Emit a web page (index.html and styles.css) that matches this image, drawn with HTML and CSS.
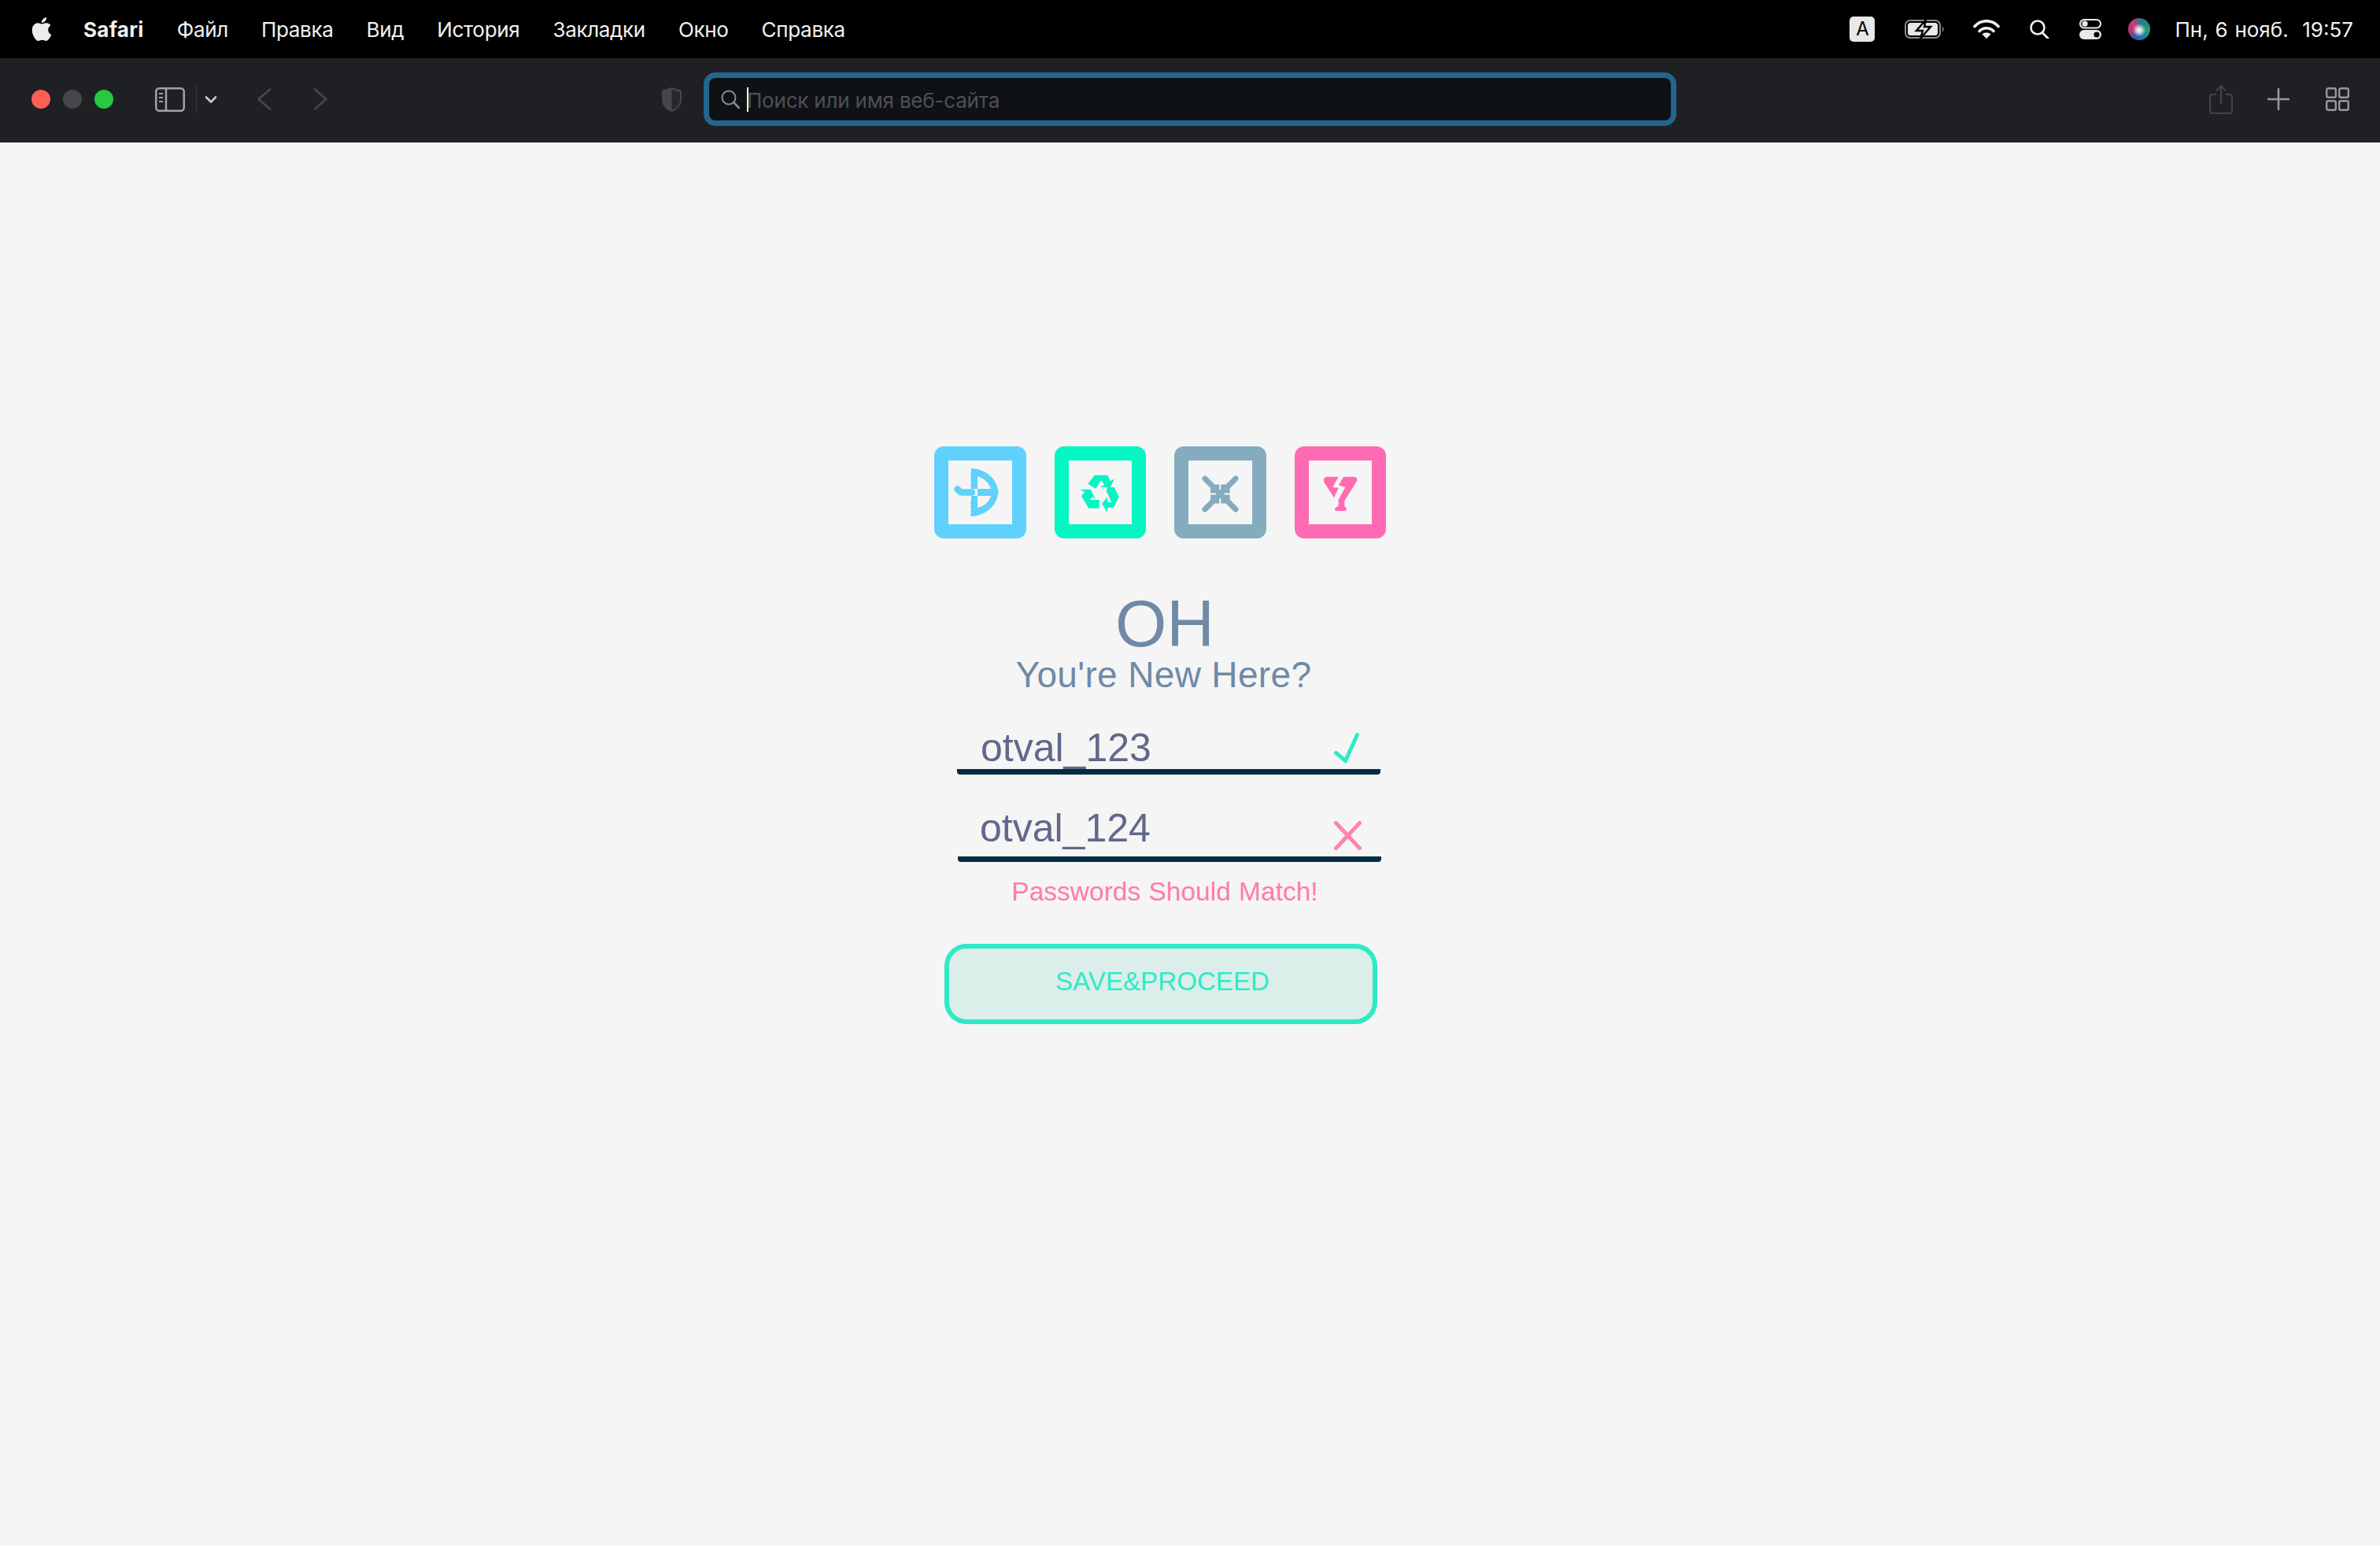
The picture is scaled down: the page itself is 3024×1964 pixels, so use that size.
FILE: index.html
```html
<!DOCTYPE html>
<html lang="ru">
<head>
<meta charset="utf-8">
<title>Safari</title>
<link rel="stylesheet" href="styles.css">
</head>
<body>
<header class="menubar">
  <svg class="apple" viewBox="0 0 24 24"><path fill="#ececec" d="M12.152 6.896c-.948 0-2.415-1.078-3.96-1.04-2.04.027-3.91 1.183-4.961 3.014-2.117 3.675-.546 9.103 1.519 12.09 1.013 1.454 2.208 3.09 3.792 3.039 1.52-.065 2.09-.987 3.935-.987 1.831 0 2.35.987 3.96.948 1.637-.026 2.676-1.48 3.676-2.948 1.156-1.688 1.636-3.325 1.662-3.415-.039-.013-3.182-1.221-3.22-4.857-.026-3.04 2.48-4.494 2.597-4.559-1.429-2.09-3.623-2.324-4.39-2.376-2-.156-3.675 1.09-4.61 1.09zM15.53 3.83c.843-1.012 1.4-2.427 1.245-3.83-1.207.052-2.662.805-3.532 1.818-.78.896-1.454 2.338-1.273 3.714 1.338.104 2.715-.688 3.559-1.701"/></svg>
  <nav class="menu">
    <span class="menu-app">Safari</span>
    <span>Файл</span>
    <span>Правка</span>
    <span>Вид</span>
    <span>История</span>
    <span>Закладки</span>
    <span>Окно</span>
    <span>Справка</span>
  </nav>
  <div class="status">
    <span class="input-badge">A</span>
    <svg class="st-battery" viewBox="0 0 51 24"><rect x="1" y="1" width="44" height="22" rx="6" fill="none" stroke="#8a8a8a" stroke-width="2"/><rect x="4" y="4" width="38" height="16" rx="3.5" fill="#e8e8e8"/><path d="M48 8.5c2 1 2 6 0 7z" fill="#8a8a8a"/><path d="M27 0 15 14h8l-3 10 13-15h-8z" fill="#e8e8e8" stroke="#000" stroke-width="2.5"/></svg>
    <svg class="st-wifi" viewBox="0 0 34 24"><g fill="none" stroke="#f0f0f0" stroke-width="3.6" stroke-linecap="round"><path d="M2 8.5C10-.5 24-.5 32 8.5"/><path d="M8 14.5c5-5 13-5 18 0"/></g><path d="M17 24l-5.5-5.5c3-2.6 8-2.6 11 0z" fill="#f0f0f0"/></svg>
    <svg class="st-search" viewBox="0 0 26 24"><circle cx="11" cy="10" r="8.5" fill="none" stroke="#f0f0f0" stroke-width="2.6"/><path d="M17 16.5l7 7" stroke="#f0f0f0" stroke-width="2.8" stroke-linecap="round"/></svg>
    <svg class="st-control" viewBox="0 0 28 26"><rect x="1" y="1" width="26" height="10.5" rx="5.2" fill="none" stroke="#e8e8e8" stroke-width="2"/><circle cx="7" cy="6.2" r="3.6" fill="#e8e8e8"/><rect y="14" width="28" height="12" rx="6" fill="#e8e8e8"/><circle cx="22" cy="20" r="3.6" fill="#000"/></svg>
    <span class="siri"></span>
    <span class="clock">Пн, 6 нояб.&nbsp; 19:57</span>
  </div>
</header>

<div class="toolbar">
  <div class="lights">
    <span class="light light-red"></span>
    <span class="light light-grey"></span>
    <span class="light light-green"></span>
  </div>
  <svg class="tb-sidebar" viewBox="0 0 38 31"><rect x="1.25" y="1.25" width="35.5" height="28.5" rx="4" fill="none" stroke="#a2a2a3" stroke-width="2.5"/><path d="M14 1v29" stroke="#a2a2a3" stroke-width="2.5"/><path d="M5 8h5M5 13h5M5 18h5" stroke="#a2a2a3" stroke-width="2"/></svg>
  <span class="tb-divider"></span>
  <svg class="tb-chevron" viewBox="0 0 16 9"><path d="M2 1.5l6 6 6-6" fill="none" stroke="#c9c9ca" stroke-width="2.6" stroke-linecap="round" stroke-linejoin="round"/></svg>
  <svg class="tb-back" viewBox="0 0 19 28"><path d="M17 1.5 2.5 14 17 26.5" fill="none" stroke="#47484a" stroke-width="2.6" stroke-linecap="round" stroke-linejoin="round"/></svg>
  <svg class="tb-forward" viewBox="0 0 19 28"><path d="M2 1.5 16.5 14 2 26.5" fill="none" stroke="#47484a" stroke-width="2.6" stroke-linecap="round" stroke-linejoin="round"/></svg>
  <svg class="tb-shield" viewBox="0 0 27 33"><path d="M13.5 1 26 5v12c0 8-6 12.500-12.500 15C7 29.500 1 25 1 17V5z" fill="#46474a"/><path d="M13.500 3.500 24 6.800V17c0 6.500-5 10.500-10.500 12.800z" fill="#27282b"/></svg>
  <div class="address">
    <svg class="addr-search" viewBox="0 0 24 24"><circle cx="10" cy="10" r="8.500" fill="none" stroke="#8c8d8e" stroke-width="2"/><path d="M16 16l7 7" stroke="#8c8d8e" stroke-width="2.500" stroke-linecap="round"/></svg>
    <span class="caret"></span>
    <span class="placeholder">Поиск или имя веб-сайта</span>
  </div>
  <svg class="tb-share" viewBox="0 0 30 37"><path d="M9 12H4a3 3 0 0 0-3 3v18a3 3 0 0 0 3 3h22a3 3 0 0 0 3-3V15a3 3 0 0 0-3-3h-5" fill="none" stroke="#414244" stroke-width="2.400"/><path d="M15 24V2M9 7.500 15 1.500l6 6" fill="none" stroke="#414244" stroke-width="2.400"/></svg>
  <svg class="tb-plus" viewBox="0 0 28 28"><path d="M14 1v26M1 14h26" stroke="#98989a" stroke-width="2.600" stroke-linecap="round"/></svg>
  <svg class="tb-grid" viewBox="0 0 30 30"><g fill="none" stroke="#98989a" stroke-width="2.400"><rect x="1.200" y="1.200" width="11.600" height="11.600" rx="2"/><rect x="17.200" y="1.200" width="11.600" height="11.600" rx="2"/><rect x="1.200" y="17.200" width="11.600" height="11.600" rx="2"/><rect x="17.200" y="17.200" width="11.600" height="11.600" rx="2"/></g></svg>
</div>

<main class="page">
  <div class="form">
    <div class="badges">
      <div class="badge badge-blue">
        <svg viewBox="0 0 80 80"><path fill="#60d1fc" fill-rule="evenodd" d="M29 10C47 10 62 24 63 38l1 2.500-1 2.500C61 58 47 70 29 71l-1-2 1-2.500-1-2.500 1-2.500-1-2.500 1-2.500-1-2.500 1-2V45h8v15c9-2 15-8 17-15H37v-9h17c-2-7-8-13-17-16v16h-8v-2l-1-2.500 1-2.500-1-2.500 1-2.500-1-2.500 1-2.500-1-2.500 1-2.500z"/><path d="M11.500 36.500 16 40.500H30" fill="none" stroke="#60d1fc" stroke-width="8.500" stroke-linecap="round" stroke-linejoin="round"/></svg>
      </div>
      <div class="badge badge-green">
        <svg viewBox="0 0 80 80"><g fill="#05f5c3"><path d="M24.300 29.700 32.700 18.700H49.300L52.700 26.300 58 23.300 52.700 34H39.300L45.300 30.700 41 25 34.300 36z"/><path d="M14.300 36.700H27.700L34.300 49.700 30.300 46.300 26.700 50H38.700V60.700H25.300L16 45.300 20 40.300z"/><path d="M49.300 34H57.700L63.700 46.300 57 59.700H49.300L48.700 66.300 42 54.700 49.300 46.300V53.300H54.300L47.700 38.700z"/></g></svg>
      </div>
      <div class="badge badge-slate">
        <svg viewBox="0 0 80 80"><path d="M21 23 60 62M60 23 21 62" stroke="#85abbe" stroke-width="7" stroke-linecap="round"/><rect x="28" y="30.500" width="24.600" height="24" rx="2" fill="#85abbe"/><path d="M40.300 27.500v9.500M40.300 48v9.500M25.500 42.500h9.500M45.500 42.500h9.500" stroke="#f5f5f5" stroke-width="2"/><path d="M37.800 27.500h5M37.800 57.500h5M25.500 40v5M55 40v5" stroke="#f5f5f5" stroke-width="3"/></svg>
      </div>
      <div class="badge badge-pink">
        <svg viewBox="0 0 80 80"><g fill="#ff6bb2"><path d="M23 20.700H37.700L30.300 34 37.700 34.700 32 47.300 19.500 28Q17 22 23 20.700z"/><path d="M44.300 20.700H57Q63 21 60.500 27L45.300 51.300V58L47.300 60Q48.500 64 46 64H34.500Q32 63 33.500 60.500L37.700 57.300V49.700L46.300 34 37.700 31.300z"/></g></svg>
      </div>
    </div>

    <h1 class="title">OH</h1>
    <h2 class="subtitle">You're New Here?</h2>

    <div class="field field-first">
      <span class="field-value">otval_123</span>
      <svg class="mark-check" viewBox="0 0 32 38"><path d="M2.500 25.500 14.500 35.500 29.500 2.500" fill="none" stroke="#2eeac5" stroke-width="5" stroke-linecap="round"/></svg>
    </div>
    <div class="field field-second">
      <span class="field-value">otval_124</span>
      <svg class="mark-cross" viewBox="0 0 35 37"><path d="M2.500 2.500 32.500 34.500M32.500 2.500 2.500 34.500" fill="none" stroke="#ff85a9" stroke-width="5" stroke-linecap="round"/></svg>
    </div>

    <p class="error">Passwords Should Match!</p>
    <button class="save" type="button">SAVE&amp;PROCEED</button>
  </div>
</main>
</body>
</html>
```
FILE: styles.css
```css
* { box-sizing: border-box; }
html, body { margin: 0; height: 100%; }
body {
  width: 3024px;
  height: 1964px;
  overflow: hidden;
  display: flex;
  flex-direction: column;
  background: #f5f5f5;
  font-family: "Liberation Sans", Arial, sans-serif;
}
svg { display: block; flex: none; }

/* menu bar */
.menubar {
  height: 74px;
  flex: none;
  display: flex;
  align-items: center;
  background: #000;
  color: #f0f0f0;
  font: 26px Inter, "Noto Sans", sans-serif;
  padding-left: 38px;
}
.apple { width: 30px; height: 32px; margin-right: 38px; }
.menu { display: flex; gap: 42px; letter-spacing: -.32px; }
.menu-app { font-weight: 700; letter-spacing: .3px; }
.status { margin-left: auto; display: flex; align-items: center; padding-right: 34px; }
.input-badge {
  width: 32px; height: 32px;
  border-radius: 5px;
  background: #e8e8e8;
  color: #000;
  font: 24px/32px Inter, sans-serif;
  text-align: center;
}
.st-battery { width: 51px; height: 24px; margin-left: 38px; }
.st-wifi { width: 34px; height: 24px; margin-left: 36px; }
.st-search { width: 26px; height: 24px; margin-left: 37px; }
.st-control { width: 28px; height: 26px; margin-left: 38px; }
.siri {
  width: 28px; height: 28px;
  margin-left: 34px;
  border-radius: 50%;
  background:
    radial-gradient(circle at 50% 55%, #fff 0, rgba(255,255,255,.7) 16%, transparent 40%),
    conic-gradient(from 20deg, #1f7f8f, #1a8a7a, #2f9d6a, #1f8a9a 30%, #2a5fb0 50%, #b03478 65%, #d03a70 80%, #1f7f8f);
}
.clock { margin-left: 31px; white-space: nowrap; word-spacing: 1.500px; }

/* toolbar */
.toolbar {
  height: 107px;
  flex: none;
  display: flex;
  align-items: center;
  background: #1f2023;
  padding: 0 0 3px 40px;
}
.lights { display: flex; gap: 16px; }
.light { width: 24px; height: 24px; border-radius: 50%; }
.light-red { background: #ff5f57; }
.light-grey { background: #46474a; }
.light-green { background: #28c840; }
.tb-sidebar { width: 38px; height: 31px; margin-left: 53px; }
.tb-divider { width: 1px; height: 36px; background: #3a3b3d; margin-left: 14px; }
.tb-chevron { width: 16px; height: 9px; margin-left: 10px; }
.tb-back { width: 19px; height: 28px; margin-left: 50px; }
.tb-forward { width: 19px; height: 28px; margin-left: 53px; }
.tb-shield { width: 27px; height: 33px; margin-left: 423px; }
.address {
  width: 1236px;
  height: 68px;
  margin-left: 27px;
  display: flex;
  align-items: center;
  background: #0f1215;
  border: 7px solid #22668f;
  border-radius: 15px;
  padding-left: 15px;
}
.addr-search { width: 24px; height: 24px; }
.caret { width: 2px; height: 31px; background: #fff; margin-left: 9px; }
.placeholder { font: 26px Inter, sans-serif; color: #4f5052; letter-spacing: -.2px; margin: 2px 0 0 -2px; }
.tb-share { width: 30px; height: 37px; margin-left: 677px; }
.tb-plus { width: 28px; height: 28px; margin-left: 44px; }
.tb-grid { width: 30px; height: 30px; margin-left: 46px; }

/* page */
.page { flex: 1; padding: 386px 0 0 1187px; }
.form { width: 580px; display: flex; flex-direction: column; }
.badges { display: flex; gap: 36px; }
.badge {
  width: 116.500px;
  height: 117px;
  border: 18px solid;
  border-radius: 12px;
  background: #f5f5f5;
}
.badge svg { width: 80px; height: 80px; }
.badge-blue { border-color: #60d1fc; }
.badge-green { border-color: #05f5c3; }
.badge-slate { border-color: #85abbe; }
.badge-pink { border-color: #ff6bb2; }

.title {
  margin: 70px 0 0 6px;
  font-size: 84px;
  line-height: 77px;
  font-weight: 400;
  text-align: center;
  color: #7089a6;
}
.subtitle {
  margin: 0 0 0 3px;
  font-size: 46px;
  line-height: 52px;
  font-weight: 400;
  letter-spacing: .35px;
  text-align: center;
  color: #7089a6;
}
.field {
  width: 538px;
  height: 70px;
  display: flex;
  justify-content: space-between;
  border-bottom: 7px solid #042c43;
  border-radius: 0 0 4px 4px;
}
.field-first { margin: 31px 0 0 29px; padding-left: 30px; }
.field-second { margin: 41px 0 0 30px; padding-left: 28px; }
.field-value { font-size: 50px; line-height: 60px; color: #62688a; }
.field-first .field-value { margin-top: 6px; }
.field-second .field-value { margin-top: -3px; }
.mark-check { width: 32px; height: 38px; margin: 17px 27px 0 0; }
.mark-cross { width: 35px; height: 37px; margin: 18px 25px 0 0; }
.error {
  margin: 18px 0 0 6px;
  font-size: 33.500px;
  line-height: 40px;
  word-spacing: 1px;
  text-align: center;
  color: #ff7da4;
}
.save {
  display: block;
  width: 550px;
  height: 102px;
  margin: 46px 0 0 13px;
  border: 6px solid #2eeac5;
  border-radius: 28px;
  background: #dbeee9;
  color: #2eeac5;
  font: 33px "Liberation Sans", Arial, sans-serif;
  letter-spacing: .1px;
  padding: 0 0 7px 4px;
}
```
